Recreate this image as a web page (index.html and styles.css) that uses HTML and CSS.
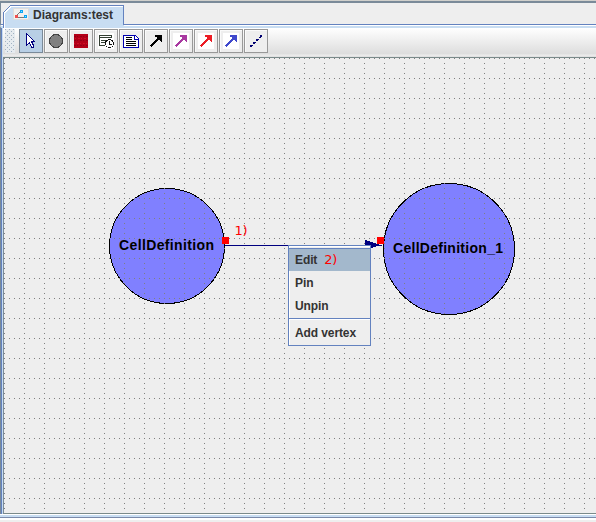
FILE: index.html
```html
<!DOCTYPE html>
<html lang="en">
<head>
<meta charset="utf-8">
<title>Diagrams:test</title>
<link rel="stylesheet" href="styles.css">
</head>
<body>
<div class="window">
  <header class="tabs">
    <div class="tab">
      <svg class="tab-shape" width="121" height="23" viewBox="0 0 121 23" shape-rendering="crispEdges"><path d="M0 23V7L7 0H121V23Z" fill="#c8ddf2"/><path d="M0 0V7L7 0Z" fill="#eee"/><path d="M.5 23V7.500L7.500 .5H120.500V20" fill="none" stroke="#6382bf"/><path d="M1.500 23V8L8 1.500H120" fill="none" stroke="#fff"/></svg>
      <svg class="tab-icon" width="16" height="12" viewBox="0 0 16 12" shape-rendering="crispEdges"><path d="M0 0h16v12H0z" fill="#ddd"/><path d="M1 1h14v10H1z" fill="#f1f1ef"/><path d="M4 7l3-3M5 9h6" stroke="#777" fill="none"/><path d="M2 7h3v3H2z" fill="#f05050"/><path d="M7 2h3v3H7zM11 7h3v3h-3z" fill="#08a5f5"/><path d="M8 3h1v1H8zM12 8h1v1h-1z" fill="#8de0ff"/></svg>
      <span>Diagrams:test</span>
    </div>
  </header>
  <div class="pane">
    <nav class="toolbar">
      <div class="grip"></div>
      <button class="tool selected"><svg viewBox="0 0 24 24"><path d="M7.500 4.500V16.500L10.500 13.500L12.500 18.500H14.500V16.500L12.500 12.500H15.500Z" fill="#fff" stroke="#000080"/></svg></button>
      <button class="tool"><svg viewBox="0 0 24 24"><circle cx="12" cy="12" r="6.500" fill="#808080" stroke="#444"/></svg></button>
      <button class="tool"><svg viewBox="0 0 24 24"><path d="M5 5h14v14H5z" fill="#b40018"/><path d="M5 7.500h14M5 11.500h14M5 16.500h14" stroke="#900018" stroke-dasharray="2 1 1 2"/><path d="M6 9.500h12M5 14.500h14" stroke="#cc1028" stroke-dasharray="1 2 2 1"/></svg></button>
      <button class="tool"><svg viewBox="0 0 24 24"><path d="M4 4h16v16H4z" fill="#fff"/><path d="M17.500 9V6.500H5.500V16.500H11M5 8.500H17M7 11.500h5M7 13.500h4" fill="none" stroke="#344034"/><circle cx="15.500" cy="14.500" r="4" fill="#fff" stroke="#111"/><path d="M15.500 12v3H18" fill="none" stroke="#111"/></svg></button>
      <button class="tool"><svg viewBox="0 0 24 24"><path d="M4.500 6.500H16.500L19.500 9.500V18.500H4.500Z" fill="#fff" stroke="#0000b0"/><path d="M15.500 6v4.500H20" fill="none" stroke="#0000b0"/><path d="M7 8.500h6M7 10.500h6M7 12.500h10M7 14.500h10M7 16.500h10" stroke="#000"/></svg></button>
      <button class="tool"><svg viewBox="0 0 24 24"><path d="M6.500 17.500L15 9" stroke="#000" stroke-width="2"/><path d="M11 6h7v7h-1v-1h-1v-1h-1v-1h-1V9h-1V8h-2z"/></svg></button>
      <button class="tool"><svg viewBox="0 0 24 24"><path d="M4 4h16v16H4z" fill="#fff"/><path d="M6.500 17.500L15 9" stroke="#a838a0" stroke-width="2"/><path d="M11 6h7v7h-1v-1h-1v-1h-1v-1h-1V9h-1V8h-2z" fill="#a838a0"/></svg></button>
      <button class="tool"><svg viewBox="0 0 24 24"><path d="M4 4h16v16H4z" fill="#fff"/><path d="M6.500 17.500L15 9" stroke="#ec1c24" stroke-width="2"/><path d="M11 6h7v7h-1v-1h-1v-1h-1v-1h-1V9h-1V8h-2z" fill="#ec1c24"/></svg></button>
      <button class="tool"><svg viewBox="0 0 24 24"><path d="M4 4h16v16H4z" fill="#fff"/><path d="M6.500 17.500L15 9" stroke="#3f48cc" stroke-width="2"/><path d="M11 6h7v7h-1v-1h-1v-1h-1v-1h-1V9h-1V8h-2z" fill="#3f48cc"/></svg></button>
      <button class="tool"><svg viewBox="0 0 24 24"><path d="M6 16h3v1H8v1H6zM9 13h3v1h-1v1H9zM12 10h3v1h-1v1h-2zM15 8h2v1h-2zM16 6h2v2h-2z" fill="#000070"/></svg></button>
    </nav>
    <main class="canvas">
      <svg class="diagram" width="592" height="455" viewBox="4 58 592 455" shape-rendering="crispEdges">
        <defs><pattern id="grid" x="4" y="58" width="20" height="20" patternUnits="userSpaceOnUse"><path d="M0 0h1v1H0zM5 0h1v1H5zM10 0h1v1h-1zM15 0h1v1h-1zM0 5h1v1H0zM0 10h1v1H0zM0 15h1v1H0z" fill="#808080"/></pattern></defs>
        <circle cx="167" cy="246" r="57.500" class="node"/>
        <circle cx="449" cy="249" r="65.500" class="node"/>
        <rect x="4" y="58" width="592" height="455" fill="url(#grid)"/>
        <path d="M225 245.500H382" stroke="#000080"/>
        <path d="M365 240v10l16-5z" fill="#000080"/>
        <path d="M222 237h7v7h-7zM377 237h7v7h-7z" fill="#f00"/>
        <text x="119" y="250" textLength="95" class="label">CellDefinition</text>
        <text x="393" y="253" textLength="110" class="label">CellDefinition_1</text>
        <text x="234.500" y="235" textLength="13" class="note">1)</text>
      </svg>
      <div class="menu">
        <div class="item active">Edit<span class="note step">2)</span></div>
        <div class="item">Pin</div>
        <div class="item">Unpin</div>
        <div class="separator"></div>
        <div class="item">Add vertex</div>
      </div>
    </main>
  </div>
  <footer class="bottom"></footer>
</div>
</body>
</html>
```
FILE: styles.css
```css
* { box-sizing: border-box; }
body { margin: 0; background: #eee; font: bold 12px "Liberation Sans", Arial, sans-serif; color: #333; overflow: hidden; }
.window { width: 596px; height: 522px; display: flex; flex-direction: column; border-top: 1px solid #d0d0cc; }
.tabs { height: 25px; flex: none; border-top: 2px solid #7a8a99; border-left: 1px solid #7a8a99; border-bottom: 1px solid #fff; padding: 2px 0 0 2px; background: linear-gradient(#6382bf, #6382bf) 0 21px / 100% 1px no-repeat #eee; }
.tab { position: relative; width: 121px; height: 20px; display: flex; padding: 3px 0 0 10px; }
.tab-shape { position: absolute; left: 0; top: 0; }
.tab-icon { position: relative; flex: none; }
.tab span { position: relative; margin-left: 4px; line-height: 14px; white-space: nowrap; }
.pane { height: 488px; flex: none; border-left: 1px solid #7a8a99; box-shadow: inset 1px 0 #6382bf, inset 2px 0 #c8ddf2; padding-left: 2px; border-top: 2px solid #c8ddf2; }
.toolbar { height: 30px; display: flex; padding: 1px 0 0 2px; background: linear-gradient(#fff, #ddd 26px, #eee 27px, #ddd 29px); border-bottom: 1px solid #7a8a8a; }
.grip { width: 10px; height: 24px; margin-right: 4px; background: conic-gradient(from 270deg at 1px 1px, #a3b3c3 90deg, transparent 0) 0 0 / 4px 4px, conic-gradient(from 270deg at 1px 1px, #a3b3c3 90deg, transparent 0) 2px 2px / 4px 4px, #e6ebef; }
.tool { width: 24px; height: 24px; margin: 0 1px 0 0; padding: 0; border: 1px solid #999; background: #eee; box-shadow: inset 1px 1px #fafafa; flex: none; }
.tool.selected { background: #b8cfe5; border-color: #7a8a99; box-shadow: none; }
.tool svg { display: block; width: 24px; height: 24px; margin: -1px; shape-rendering: crispEdges; }
.canvas { position: relative; height: 456px; border-left: 1px solid #7a8a99; border-bottom: 1px solid #7a8a8a; }
.diagram { display: block; }
.node { fill: #8080ff; stroke: #000; }
.label { font: bold 14px "Liberation Sans", Arial, sans-serif; fill: #000; }
.note { font: 13px "DejaVu Sans", sans-serif; fill: #f00; color: #f00; }
.menu { position: absolute; left: 284px; top: 187px; width: 83px; height: 101px; padding-top: 2px; background: #eee; border: 1px solid #6382bf; box-shadow: inset 1px 1px #fff; }
.item { height: 23px; padding-left: 6px; line-height: 23px; letter-spacing: -.1px; white-space: nowrap; }
.item.active { height: 23px; margin-bottom: 1px; line-height: 22px; background: #a3b8cc; border-top: 1px solid #6382bf; }
.step { display: inline-block; margin-left: 7px; line-height: 20px; letter-spacing: -.4px; }
.separator { height: 2px; margin: 0 0 2px; background: linear-gradient(#6382bf 50%, #fff 50%); }
.bottom { height: 8px; flex: none; background: linear-gradient(#fff 0 1px, #c8ddf2 1px 3px, #7a8aaa 3px 4px, #fff 4px 6px, #eee 6px); }
```
